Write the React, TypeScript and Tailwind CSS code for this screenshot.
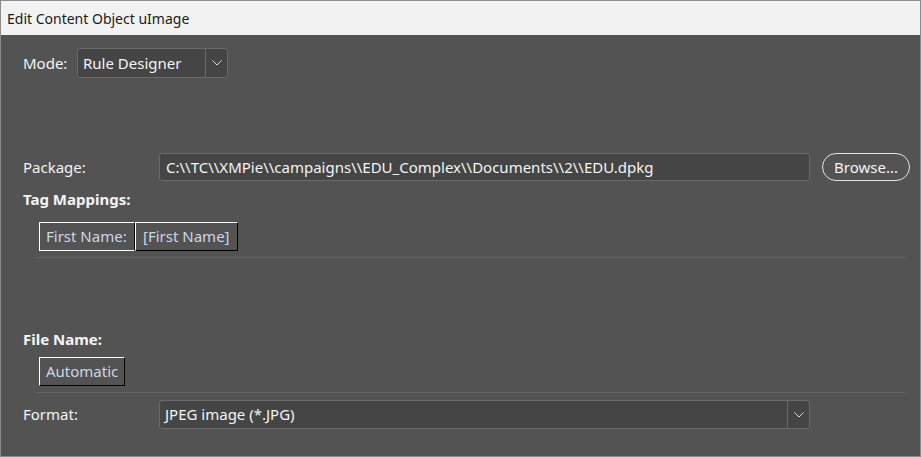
const font = { fontFamily: '"Noto Sans", "Liberation Sans", sans-serif' };

// Flat arrow glyph used by the combo boxes
const Arrow = () => (
  <svg width="10" height="6" viewBox="0 0 10 6" className="text-[#d8d8d8]">
    <polyline points="0.5,0.5 5,5 9.5,0.5" fill="none" stroke="currentColor" strokeWidth="1" />
  </svg>
);

// Combo box with the split arrow button on the right
const Combo = ({ value, className }: { value: string; className: string }) => (
  <div className={`flex rounded-[3px] border border-[#6a6a6a] bg-[#454545] ${className}`}>
    <div className="flex flex-1 items-center pl-[5px] text-[15px] text-[#f4f4f4]">{value}</div>
    <div className="flex w-[22px] items-center justify-center border-l border-[#6a6a6a]">
      <Arrow />
    </div>
  </div>
);

const Cell = ({ text, className }: { text: string; className: string }) => (
  <div className={`flex h-[29px] items-center px-[6px] text-[15px] text-[#cdd6e3] ${className}`}>{text}</div>
);

export default function App() {
  return (
    <div className="flex h-[457px] w-[921px] flex-col border border-[#8c8c8c] bg-[#535353]" style={font}>
      <div className="flex h-[34px] items-center bg-[#f2f2f2] pl-[6px] text-[14px] text-[#1a1a1a]">
        Edit Content Object uImage
      </div>

      <div className="flex flex-col pl-[22px] pr-[10px]">
        <div className="mt-[13px] flex items-center">
          <span className="w-[54px] shrink-0 text-[15px] text-[#f4f4f4]">Mode:</span>
          <Combo value="Rule Designer" className="h-[30px] w-[151px]" />
        </div>

        <div className="mt-[75px] flex items-center">
          <span className="w-[136px] shrink-0 text-[15px] text-[#f4f4f4]">Package:</span>
          <div className="flex h-[28px] w-[651px] shrink-0 items-center rounded-[3px] border border-[#6a6a6a] bg-[#454545] pl-[6px] text-[15px] text-[#f4f4f4]">
            C:\\TC\\XMPie\\campaigns\\EDU_Complex\\Documents\\2\\EDU.dpkg
          </div>
          <button className="ml-[12px] flex h-[28px] w-[88px] shrink-0 items-center justify-center rounded-full border border-[#e6e6e6] text-[15px] text-[#f4f4f4]">
            Browse...
          </button>
        </div>

        <div className="mt-[8px] flex h-[20px] items-center text-[15px] font-bold text-[#f4f4f4]">Tag Mappings:</div>

        <div className="ml-[16px] mt-[13px] flex">
          <Cell text="First Name:" className="w-[96px] border border-white border-r-black" />
          <Cell text="[First Name]" className="w-[103px] border border-white border-b-black border-r-black pl-[7px]" />
        </div>

        <div className="ml-[12px] mr-[5px] mt-[6px] h-px bg-[#636363]" />

        <div className="mt-[71px] flex h-[20px] items-center text-[15px] font-bold text-[#f4f4f4]">File Name:</div>

        <div className="ml-[16px] mt-[8px] flex">
          <Cell text="Automatic" className="w-[86px] border border-white border-b-black border-r-black" />
        </div>

        <div className="ml-[12px] mr-[5px] mt-[6px] h-px bg-[#636363]" />

        <div className="mt-[7px] flex items-center">
          <span className="w-[136px] shrink-0 text-[15px] text-[#f4f4f4]">Format:</span>
          <Combo value="JPEG image (*.JPG)" className="h-[29px] w-[651px]" />
        </div>
      </div>
    </div>
  );
}
